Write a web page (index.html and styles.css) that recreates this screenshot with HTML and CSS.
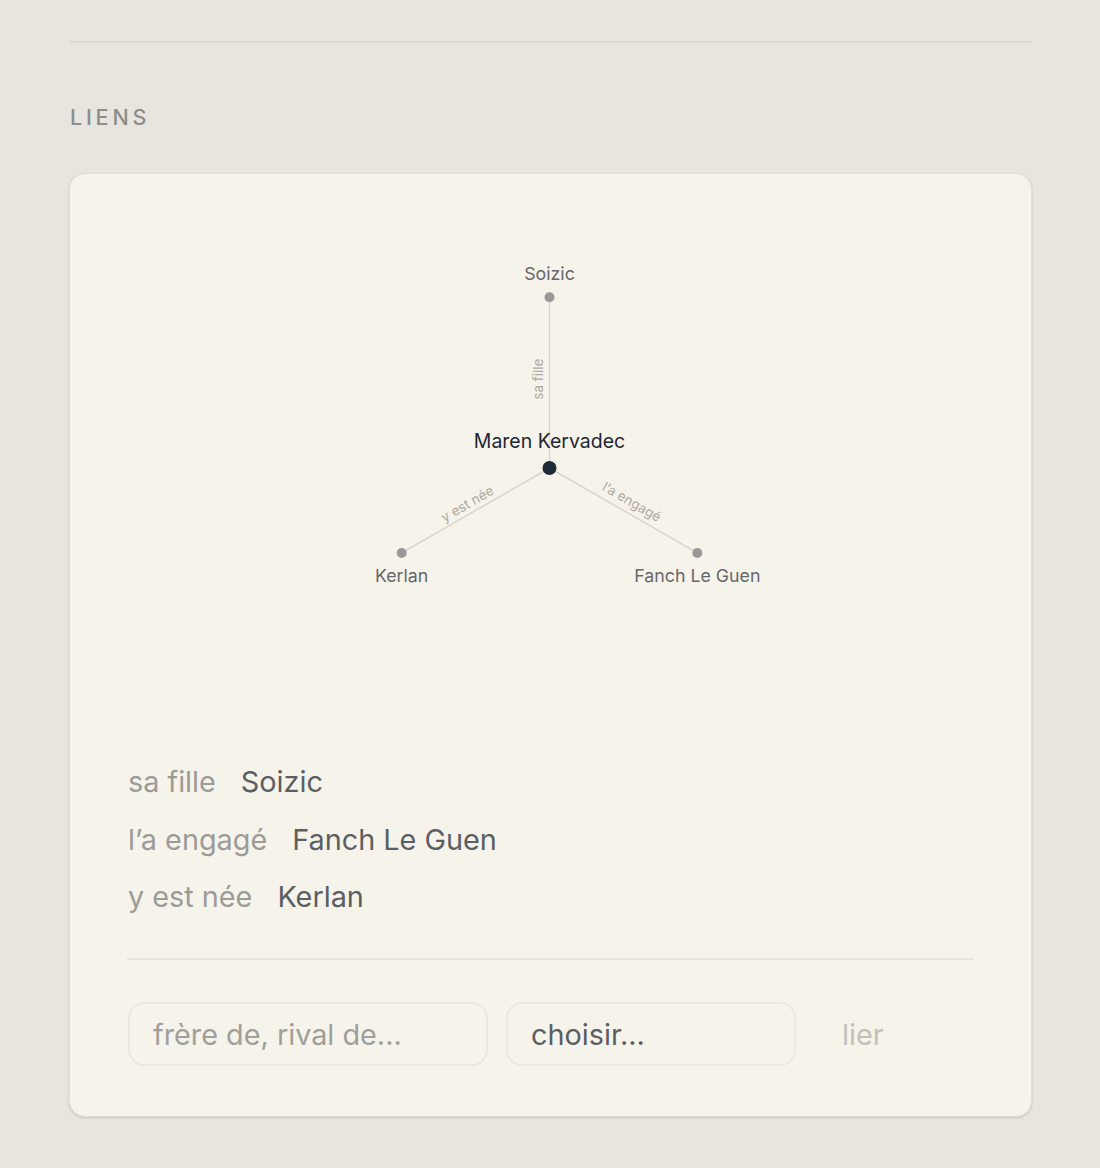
FILE: index.html
```html
<!DOCTYPE html>
<html lang="fr">
<head>
<meta charset="utf-8">
<link rel="stylesheet" href="styles.css">
<title>Liens</title>
</head>
<body>
<main class="page">
  <hr class="rule">
  <h2 class="section-title">LIENS</h2>
  <section class="card">
    <div class="graph">
      <svg class="graph-svg" width="848" height="480" viewBox="0 0 848 480" xmlns="http://www.w3.org/2000/svg">
        <g class="edges">
          <line x1="423" y1="234" x2="423" y2="63"/>
          <line x1="423" y1="234" x2="275" y2="319"/>
          <line x1="423" y1="234" x2="571" y2="319"/>
        </g>
        <g class="edge-labels">
          <text transform="translate(416 145) rotate(-90)" text-anchor="middle">sa fille</text>
          <text transform="translate(343 274) rotate(-30)" text-anchor="middle">y est née</text>
          <text transform="translate(503 272) rotate(30)" text-anchor="middle">l’a engagé</text>
        </g>
        <g class="nodes">
          <circle cx="423" cy="63" r="5"/>
          <circle cx="275" cy="319" r="5"/>
          <circle cx="571" cy="319" r="5"/>
        </g>
        <circle class="center-node" cx="423" cy="234" r="7"/>
        <g class="node-labels">
          <text x="423" y="46" text-anchor="middle">Soizic</text>
          <text x="275" y="348" text-anchor="middle">Kerlan</text>
          <text x="571" y="348" text-anchor="middle">Fanch Le Guen</text>
        </g>
        <text class="center-label" x="423" y="214" text-anchor="middle">Maren Kervadec</text>
      </svg>
    </div>
    <ul class="links">
      <li class="link"><span class="rel">sa fille</span><span class="who">Soizic</span></li>
      <li class="link"><span class="rel">l’a engagé</span><span class="who">Fanch Le Guen</span></li>
      <li class="link"><span class="rel">y est née</span><span class="who">Kerlan</span></li>
    </ul>
    <hr class="divider">
    <form class="add-link">
      <input class="field field-rel" type="text" placeholder="frère de, rival de...">
      <div class="field field-select">choisir...</div>
      <button class="btn-link" type="button">lier</button>
    </form>
  </section>
</main>
</body>
</html>
```

FILE: styles.css
```css
* { box-sizing: border-box; }

html, body {
  margin: 0;
  padding: 0;
  background: #e8e5df;
  font-family: Inter, "Noto Sans", "Liberation Sans", sans-serif;
}

.page {
  padding: 41px 68px 40px 69px;
}

.rule {
  border: 0;
  height: 2px;
  background: #dcd8d0;
  margin: 0 0 0 1px;
}

.section-title {
  margin: 61px 0 0 1px;
  font-size: 21.5px;
  font-weight: 500;
  letter-spacing: 3.8px;
  color: #8d8c89;
  line-height: 26px;
}

.card {
  margin-top: 43px;
  background: #f6f3ea;
  border: 1px solid #e3dfd5;
  border-radius: 16px;
  box-shadow: 0 1px 3px rgba(0, 0, 0, 0.10), 0 1px 2px rgba(0, 0, 0, 0.05);
  padding: 60px 57px 50px 57px;
}

.graph {
  display: flex;
  justify-content: center;
  margin-bottom: 47px;
}

.graph-svg { display: block; }

.edges line {
  stroke: #d8d5cc;
  stroke-width: 1.5;
}

.edge-labels text {
  font-size: 13.5px;
  fill: #aba9a4;
  font-family: Inter, "Noto Sans", sans-serif;
}

.nodes circle { fill: #9a9998; }

.center-node { fill: #1f2a37; }

.node-labels text {
  font-size: 17.8px;
  fill: #66676a;
  font-family: Inter, "Noto Sans", sans-serif;
}

.center-label {
  font-size: 19.5px;
  fill: #1f2733;
  font-family: Inter, "Noto Sans", sans-serif;
}

.links {
  list-style: none;
  margin: 0;
  padding: 0 0 0 1px;
  display: flex;
  flex-direction: column;
  gap: 15.5px;
}

.link {
  display: flex;
  gap: 25px;
  font-size: 28.8px;
  line-height: 42px;
}

.rel { color: #9c9b98; }
.who { color: #5b5f64; }

.divider {
  border: 0;
  height: 2px;
  background: #e9e5dc;
  margin: 40px 0 42px 0;
}

.add-link {
  display: flex;
  align-items: center;
  gap: 18px;
  padding-left: 1px;
}

.field {
  height: 64px;
  border: 2px solid #ece8df;
  border-radius: 16px;
  background: #f6f3ea;
  font-family: inherit;
  font-size: 28.8px;
  padding: 0 23px;
  outline: none;
}

.field-rel {
  width: 360px;
  color: #5b5f64;
}

.field-rel::placeholder { color: #a09f9b; }

.field-select {
  width: 290px;
  display: flex;
  align-items: center;
  color: #5b5f64;
}

.btn-link {
  border: 0;
  background: transparent;
  font-family: inherit;
  font-size: 28.8px;
  color: #c3c0b9;
  padding: 0 28px;
  height: 64px;
  cursor: pointer;
}
```
